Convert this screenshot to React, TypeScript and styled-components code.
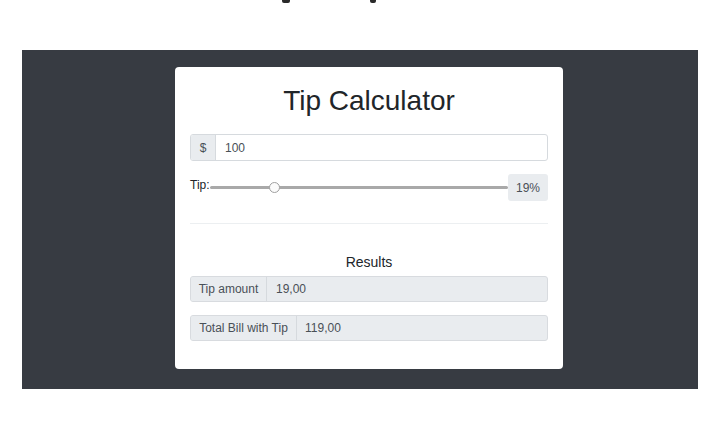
import React from "react";
import styled, { createGlobalStyle } from "styled-components";

const Global = createGlobalStyle`
  html, body { margin: 0; padding: 0; background: #ffffff; }
  body { font-family: "Liberation Sans", Arial, Helvetica, sans-serif; color: #212529; }
  * { box-sizing: border-box; }
`;

const Top = styled.div`
  height: 50px;
  display: flex;
  align-items: flex-start;
  padding-left: 282px;
  gap: 80px;
`;

const Mark = styled.span<{ $w: number }>`
  display: block;
  width: ${(p) => p.$w}px;
  height: 3px;
  background: #2a2a2a;
  border-radius: 0 0 2px 2px;
`;

const Panel = styled.div`
  margin: 0 22px;
  height: 339px;
  background: #373b42;
  display: flex;
  justify-content: center;
  padding-top: 17px;
  padding-left: 18px;
`;

const Card = styled.div`
  width: 388px;
  height: 302px;
  background: #ffffff;
  border-radius: 4px;
  padding: 15px;
  display: flex;
  flex-direction: column;
`;

const Title = styled.h1`
  margin: 2px 0 16px;
  font-size: 28px;
  line-height: 34px;
  font-weight: 400;
  text-align: center;
  color: #212529;
`;

const Group = styled.div<{ $mb?: number; $filled?: boolean }>`
  display: flex;
  height: ${(p) => (p.$filled ? 26 : 27)}px;
  border: 1px solid ${(p) => (p.$filled ? "#d8dbdf" : "#d6dade")};
  border-radius: 3px;
  overflow: hidden;
  background: ${(p) => (p.$filled ? "#e9ecef" : "#ffffff")};
  margin-bottom: ${(p) => p.$mb ?? 0}px;
  font-size: 12px;
  color: #495057;
`;

const Addon = styled.div<{ $w: number }>`
  width: ${(p) => p.$w}px;
  flex: none;
  display: flex;
  align-items: center;
  justify-content: center;
  background: #e9ecef;
  border-right: 1px solid #d6dade;
  color: #495057;
`;

const Value = styled.div<{ $pl: number }>`
  flex: 1;
  display: flex;
  align-items: center;
  padding-left: ${(p) => p.$pl}px;
  color: #495057;
`;

const TipRow = styled.div`
  display: flex;
  align-items: center;
  height: 27px;
  margin-top: 13px;
`;

const TipLabel = styled.label`
  font-size: 12px;
  color: #212529;
  align-self: flex-start;
  margin-top: 4px;
  width: 20px;
  flex: none;
`;

const Range = styled.input`
  -webkit-appearance: none;
  appearance: none;
  flex: 1;
  margin: 0;
  height: 12px;
  background: transparent;
  &::-webkit-slider-runnable-track {
    height: 3px;
    background: #a9a9a9;
    border-radius: 2px;
  }
  &::-webkit-slider-thumb {
    -webkit-appearance: none;
    width: 11px;
    height: 11px;
    border-radius: 50%;
    background: #fbfbfb;
    border: 1px solid #a0a0a0;
    margin-top: -4px;
  }
`;

const Output = styled.output`
  width: 40px;
  height: 27px;
  flex: none;
  display: flex;
  align-items: center;
  justify-content: center;
  background: #e9ecef;
  border-radius: 3px;
  font-size: 12px;
  color: #495057;
`;

const Rule = styled.hr`
  border: 0;
  border-top: 1px solid #eceff1;
  margin: 22px 0 28px;
`;

const Subtitle = styled.h5`
  margin: 0 0 4px;
  font-size: 14px;
  line-height: 20px;
  font-weight: 400;
  text-align: center;
  color: #212529;
`;

export default function App() {
  return (
    <>
      <Global />
      <Top>
        <Mark $w={8} />
        <Mark $w={6} />
      </Top>
      <Panel>
        <Card>
          <Title>Tip Calculator</Title>
          <Group>
            <Addon $w={25}>$</Addon>
            <Value $pl={9}>100</Value>
          </Group>
          <TipRow>
            <TipLabel>Tip:</TipLabel>
            <Range type="range" min={0} max={92} defaultValue={19} />
            <Output>19%</Output>
          </TipRow>
          <Rule />
          <Subtitle>Results</Subtitle>
          <Group $filled $mb={13}>
            <Addon $w={76}>Tip amount</Addon>
            <Value $pl={9}>19,00</Value>
          </Group>
          <Group $filled>
            <Addon $w={106}>Total Bill with Tip</Addon>
            <Value $pl={8}>119,00</Value>
          </Group>
        </Card>
      </Panel>
    </>
  );
}
